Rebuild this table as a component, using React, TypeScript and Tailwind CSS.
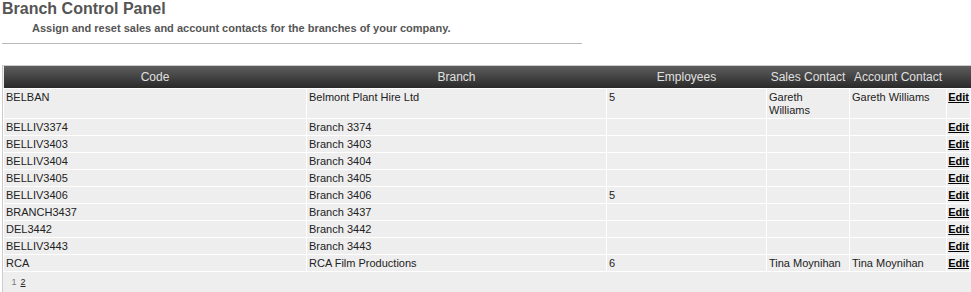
import React from "react";

type Row = { code: string; branch: string; emp: string; sales: string; account: string };

const rows: Row[] = [
  { code: "BELBAN", branch: "Belmont Plant Hire Ltd", emp: "5", sales: "Gareth Williams", account: "Gareth Williams" },
  { code: "BELLIV3374", branch: "Branch 3374", emp: "", sales: "", account: "" },
  { code: "BELLIV3403", branch: "Branch 3403", emp: "", sales: "", account: "" },
  { code: "BELLIV3404", branch: "Branch 3404", emp: "", sales: "", account: "" },
  { code: "BELLIV3405", branch: "Branch 3405", emp: "", sales: "", account: "" },
  { code: "BELLIV3406", branch: "Branch 3406", emp: "5", sales: "", account: "" },
  { code: "BRANCH3437", branch: "Branch 3437", emp: "", sales: "", account: "" },
  { code: "DEL3442", branch: "Branch 3442", emp: "", sales: "", account: "" },
  { code: "BELLIV3443", branch: "Branch 3443", emp: "", sales: "", account: "" },
  { code: "RCA", branch: "RCA Film Productions", emp: "6", sales: "Tina Moynihan", account: "Tina Moynihan" },
];

const td = "border border-white pl-[2px] pr-[4px] pt-[2px] pb-[1px] align-top leading-[13px]";
const tdEdit = "border border-white pl-[1px] pr-[1px] pt-[2px] pb-[1px] align-top leading-[13px] text-right";

export default function App() {
  return (
    <div className="w-[971px] h-[292px] overflow-hidden bg-white text-[#333]" style={{ fontFamily: '"Liberation Sans", Arial, sans-serif' }}>
      <h1 className="pl-[2px] text-[16px] font-bold leading-[17px] text-[#555]">Branch Control Panel</h1>
      <p className="pl-[32px] pt-[5px] text-[11px] font-bold leading-[13px] text-[#555]">
        Assign and reset sales and account contacts for the branches of your company.
      </p>
      <div className="ml-[2px] mt-[8px] w-[580px] h-px bg-[#bbb]" />
      <div className="ml-[2px] mt-[21px] w-[969px] border-l border-t border-[#ccc] bg-[#eee] pb-[40px]">
        <table className="w-[967px] table-fixed border-collapse text-[11px] text-[#222]">
          <colgroup>
            <col className="w-[303px]" />
            <col className="w-[300px]" />
            <col className="w-[160px]" />
            <col className="w-[83px]" />
            <col className="w-[97px]" />
            <col className="w-[24px]" />
          </colgroup>
          <thead>
            <tr className="h-[22px] bg-gradient-to-b from-[#5e5e5e] to-[#2a2a2a] text-[12px] font-normal text-[#e0e0e0]">
              <th className="font-normal">Code</th>
              <th className="font-normal">Branch</th>
              <th className="font-normal">Employees</th>
              <th className="font-normal whitespace-nowrap">Sales Contact</th>
              <th className="font-normal whitespace-nowrap">Account Contact</th>
              <th className="font-normal"></th>
            </tr>
          </thead>
          <tbody>
            {rows.map((r) => (
              <tr key={r.code}>
                <td className={td}>{r.code}</td>
                <td className={td}>{r.branch}</td>
                <td className={td}>{r.emp}</td>
                <td className={td}>{r.sales}</td>
                <td className={td}>{r.account}</td>
                <td className={tdEdit}>
                  <a href="#" className="font-bold text-black underline">Edit</a>
                </td>
              </tr>
            ))}
            <tr>
              <td colSpan={6} className="pl-[8px] pt-[3px] border-t border-white leading-[13px]">
                <span className="text-[9px] text-[#777]">1</span>
                <a href="#" className="ml-[4px] text-[9px] text-[#222] underline">2</a>
              </td>
            </tr>
          </tbody>
        </table>
      </div>
    </div>
  );
}
